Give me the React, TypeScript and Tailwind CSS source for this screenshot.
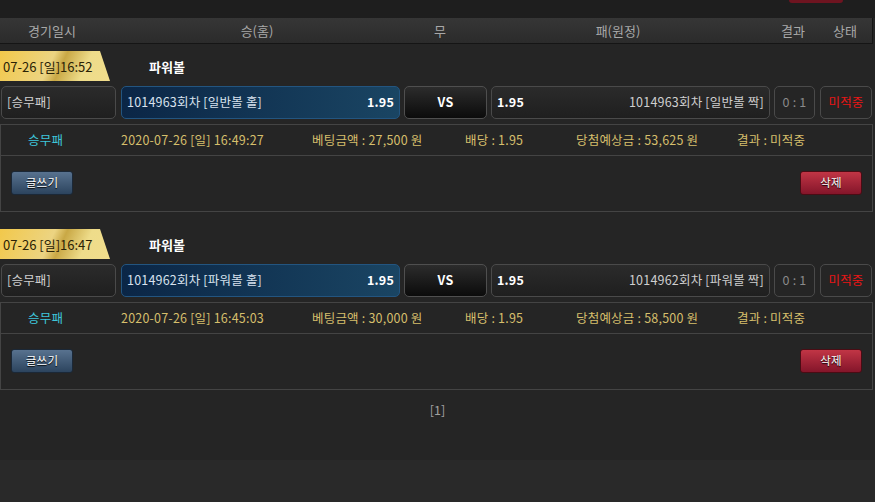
import React from 'react';

type Bet = {
  time: string;
  game: string;
  round: string;
  placed: string;
  amount: string;
  payout: string;
};

const bets: Bet[] = [
  { time: '07-26 [일]16:52', game: '파워볼', round: '1014963회차 [일반볼', placed: '2020-07-26 [일] 16:49:27', amount: '27,500', payout: '53,625' },
  { time: '07-26 [일]16:47', game: '파워볼', round: '1014962회차 [파워볼', placed: '2020-07-26 [일] 16:45:03', amount: '30,000', payout: '58,500' },
];

const font = "font-['Noto_Sans_CJK_KR','Liberation_Sans',sans-serif]";

function BetBlock({ bet }: { bet: Bet }) {
  return (
    <div className="mt-[7px]">
      <div className="flex items-center h-[30px]">
        <div className="w-[110px] h-full flex items-center pl-[3px] text-[13px] text-[#2a2206] bg-[linear-gradient(115deg,#f2c84a_0%,#ecd482_45%,#c9a845_55%,#eedc8a_75%,#f1dd8c_100%)] [clip-path:polygon(0_0,100px_0,110px_100%,0_100%)]">
          {bet.time}
        </div>
        <div className="ml-[39px] text-[13px] font-bold text-white">{bet.game}</div>
      </div>

      <div className="mt-[5px] flex h-[33px] text-[12.5px] tracking-[0.2px]">
        <div className="ml-[1px] w-[115px] flex items-center pl-[5px] rounded-[5px] border border-[#4a4a4a] bg-[linear-gradient(#2b2b2b,#1f1f1f)] text-[#cfcfcf]">
          [승무패]
        </div>
        <div className="ml-[5px] w-[279px] flex items-center justify-between px-[5px] rounded-[5px] border border-[#235580] bg-[linear-gradient(90deg,#0b2646,#1a4563)]">
          <span className="text-[#d8e2ee]">{bet.round} 홀]</span>
          <span className="font-bold text-white">1.95</span>
        </div>
        <div className="ml-[4px] w-[83px] flex items-center justify-center rounded-[5px] border border-[#4f4f4f] bg-[linear-gradient(#2c2c2c,#0b0b0b)] font-bold text-white">
          VS
        </div>
        <div className="ml-[4px] w-[279px] flex items-center justify-between px-[5px] rounded-[5px] border border-[#4a4a4a] bg-[linear-gradient(#2b2b2b,#1f1f1f)]">
          <span className="font-bold text-white">1.95</span>
          <span className="text-[#cfcfcf]">{bet.round} 짝]</span>
        </div>
        <div className="ml-[4px] w-[41px] flex items-center justify-center rounded-[5px] border border-[#4a4a4a] bg-[#252525] text-[#8a8a8a]">
          0 : 1
        </div>
        <div className="ml-[5px] w-[52px] flex items-center justify-center rounded-[5px] border border-[#4a4a4a] bg-[#252525] text-[#e81515]">
          미적중
        </div>
      </div>

      <div className="mt-[5px] w-[873px] border border-[#444444] text-[12.5px] tracking-[0.2px]">
        <div className="flex items-center h-[31px] border-b border-[#444444] text-[#d6bf6c]">
          <span className="w-[120px] pl-[27px] text-[#3ec6dc]">승무패</span>
          <span className="w-[191px]">{bet.placed}</span>
          <span className="w-[153px]">베팅금액 : {bet.amount} 원</span>
          <span className="w-[111px]">배당 : 1.95</span>
          <span className="w-[161px]">당첨예상금 : {bet.payout} 원</span>
          <span>결과 : 미적중</span>
        </div>
        <div className="flex justify-between items-start h-[55px] pt-[15px] px-[10px]">
          <button className="w-[62px] h-[24px] rounded-[3px] border border-[#1b2837] bg-[linear-gradient(#58728f,#2c445e)] text-[11.5px] text-white [text-shadow:0_1px_1px_#000]">
            글쓰기
          </button>
          <button className="w-[62px] h-[24px] rounded-[3px] border border-[#4a0c14] bg-[linear-gradient(#c13545,#84152a)] text-[11.5px] text-white [text-shadow:0_1px_1px_#000]">
            삭제
          </button>
        </div>
      </div>
    </div>
  );
}

export default function App() {
  return (
    <div className={`${font} w-[875px] min-h-[502px] bg-[#292929] leading-none`}>
      <div className="h-[18px] bg-[#1e1e1e] relative">
        <div className="absolute left-[789px] top-0 w-[54px] h-[3px] rounded-b-[3px] bg-[#6e1420]" />
      </div>
      <div className="h-[442px] bg-[#252525]">
        <div className="w-[873px] h-[26px] flex items-center border-b border-r border-[#151515] bg-[linear-gradient(#363636,#2b2b2b)] text-[13px] text-[#a8a8a8]">
          <span className="w-[104px] text-center">경기일시</span>
          <span className="w-[306px] text-center">승(홈)</span>
          <span className="w-[60px] text-center">무</span>
          <span className="w-[296px] text-center">패(원정)</span>
          <span className="w-[54px] text-center">결과</span>
          <span className="w-[50px] text-center">상태</span>
        </div>

        <BetBlock bet={bets[0]} />
        <div className="h-[10px]" />
        <BetBlock bet={bets[1]} />

        <div className="mt-[14px] text-center text-[12.5px] text-[#a0a0a0]">[1]</div>
      </div>
    </div>
  );
}
